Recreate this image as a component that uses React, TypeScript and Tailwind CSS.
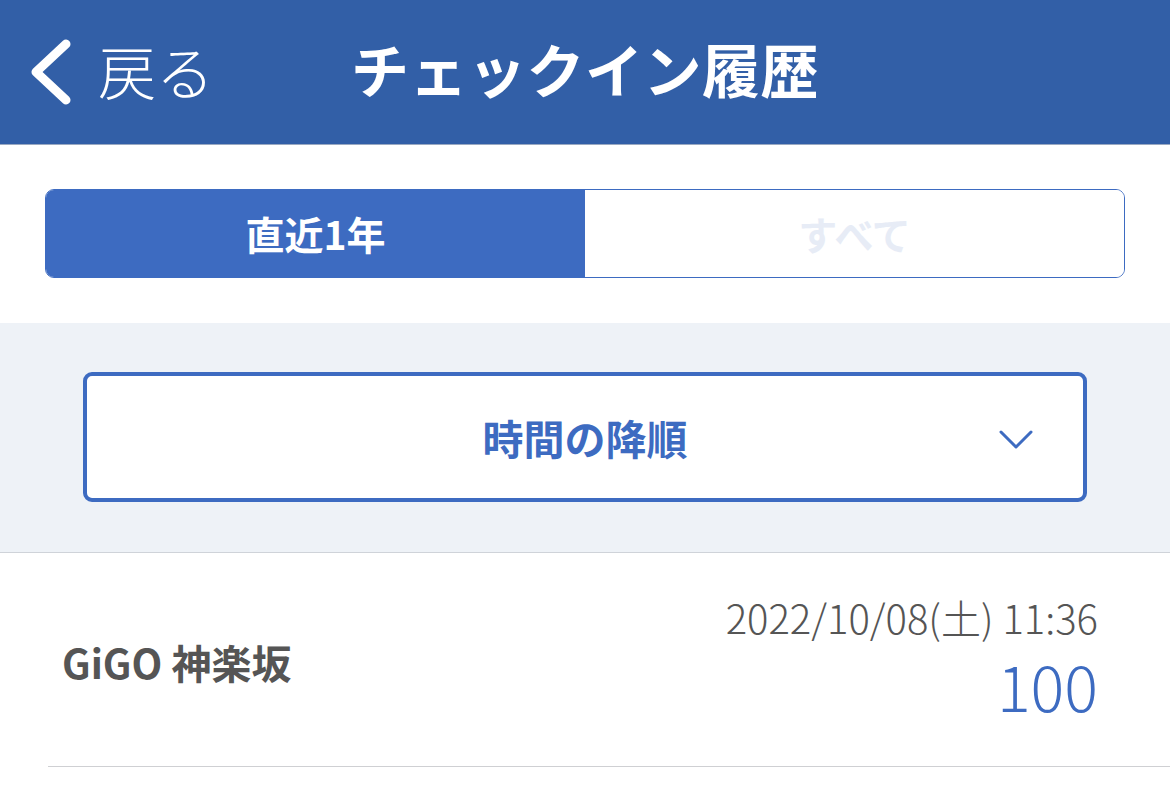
const jp = { fontFamily: '"Noto Sans CJK JP", "Noto Sans", sans-serif' };

function Header() {
  return (
    <header className="relative h-[145px] bg-[#325fa7] border-b border-[#9aa9c2] flex items-center justify-center">
      <div className="absolute left-[28px] top-0 h-full flex items-center gap-[24px]">
        <svg width="46" height="68" viewBox="0 0 46 68" fill="none">
          <path d="M38 6 L8 34 L38 62" stroke="white" strokeWidth="9" strokeLinecap="round" strokeLinejoin="round" />
        </svg>
        <span className="text-[58px] font-light text-white leading-none mt-[-4px]">戻る</span>
      </div>
      <h1 className="text-[58px] font-bold text-white leading-none tracking-[0.5px] mt-[-8px]">チェックイン履歴</h1>
    </header>
  );
}

function Segment() {
  return (
    <div className="px-[45px] pt-[44px] pb-[45px] bg-white">
      <div className="flex h-[89px] rounded-[9px] border border-[#3d6bc1] overflow-hidden">
        <div className="flex-1 bg-[#3d6bc1] flex items-center justify-center">
          <span className="text-[39px] font-bold text-white leading-none">直近1年</span>
        </div>
        <div className="flex-1 bg-white flex items-center justify-center">
          <span className="text-[39px] font-bold text-[#e7ecf6] leading-none">すべて</span>
        </div>
      </div>
    </div>
  );
}

function SortSelect() {
  return (
    <div className="bg-[#eef2f7] px-[83px] pt-[49px] pb-[50px] border-b border-[#cfd3d9]">
      <div className="relative h-[130px] rounded-[9px] border-[4px] border-[#3d6bc1] bg-white flex items-center justify-center">
        <span className="text-[41px] font-bold text-[#3d6bc1] leading-none">時間の降順</span>
        <svg className="absolute right-[50px] top-[54px]" width="34" height="20" viewBox="0 0 34 20" fill="none">
          <path d="M2 2 L17 17 L32 2" stroke="#3d6bc1" strokeWidth="3" strokeLinecap="round" strokeLinejoin="round" />
        </svg>
      </div>
    </div>
  );
}

function HistoryRow() {
  return (
    <div className="pl-[48px]">
      <div className="flex items-center justify-between h-[214px] pl-[14px] pr-[72px] border-b border-[#cfd0d3]">
        <span className="text-[40px] font-bold text-[#555555] leading-none mt-[4px]">GiGO 神楽坂</span>
        <div className="flex flex-col items-end mt-[-6px]">
          <span className="text-[40px] font-light text-[#555555] leading-none">2022/10/08(土) 11:36</span>
          <span className="text-[63px] font-light text-[#3d6bc1] leading-none mt-[16px]">100</span>
        </div>
      </div>
    </div>
  );
}

export default function App() {
  return (
    <div className="w-[1170px] h-[803px] bg-white overflow-hidden" style={jp}>
      <Header />
      <Segment />
      <SortSelect />
      <HistoryRow />
    </div>
  );
}
